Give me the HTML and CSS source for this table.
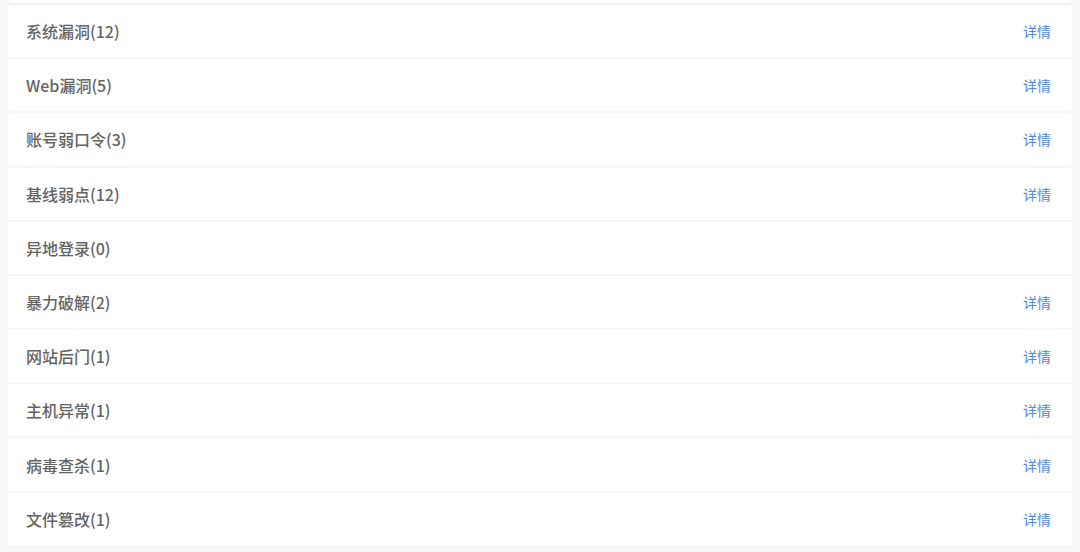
FILE: index.html
```html
<!DOCTYPE html>
<html lang="zh-CN">
<head>
<meta charset="UTF-8">
<meta name="viewport" content="width=device-width, initial-scale=1.0">
<title>安全事件</title>
<link rel="stylesheet" href="styles.css">
</head>
<body>
    <div class="top-card"></div>
    <div class="list">
        <div class="row"><span class="name">系统漏洞(12)</span><a class="detail" href="#">详情</a></div>
        <div class="row"><span class="name">Web漏洞(5)</span><a class="detail" href="#">详情</a></div>
        <div class="row"><span class="name">账号弱口令(3)</span><a class="detail" href="#">详情</a></div>
        <div class="row"><span class="name">基线弱点(12)</span><a class="detail" href="#">详情</a></div>
        <div class="row"><span class="name">异地登录(0)</span></div>
        <div class="row"><span class="name">暴力破解(2)</span><a class="detail" href="#">详情</a></div>
        <div class="row"><span class="name">网站后门(1)</span><a class="detail" href="#">详情</a></div>
        <div class="row"><span class="name">主机异常(1)</span><a class="detail" href="#">详情</a></div>
        <div class="row"><span class="name">病毒查杀(1)</span><a class="detail" href="#">详情</a></div>
        <div class="row"><span class="name">文件篡改(1)</span><a class="detail" href="#">详情</a></div>
    </div>
</body>
</html>
```
FILE: styles.css
```css
body {
  margin: 0;
  background-color: #f8f8f9;
  font-family: "Noto Sans CJK SC", "Liberation Sans", sans-serif;
  overflow: hidden;
}
.top-card {
  height: 3px;
  margin: 0 10px;
  background-color: #ffffff;
  box-shadow: 0 1px 2px rgba(0, 0, 0, 0.05);
}
.list {
  display: flex;
  flex-direction: column;
  gap: 2.2px;
  padding: 2px 8px 0 8px;
}
.row {
  display: flex;
  justify-content: space-between;
  align-items: center;
  height: 52px;
  padding: 0 21px 0 18px;
  background-color: #ffffff;
  box-shadow: 0 0 2px rgba(0, 0, 0, 0.03);
}
.name {
  font-size: 16px;
  font-weight: 500;
  color: #646464;
}
.detail {
  font-size: 14px;
  color: #5088dc;
  text-decoration: none;
}
```
